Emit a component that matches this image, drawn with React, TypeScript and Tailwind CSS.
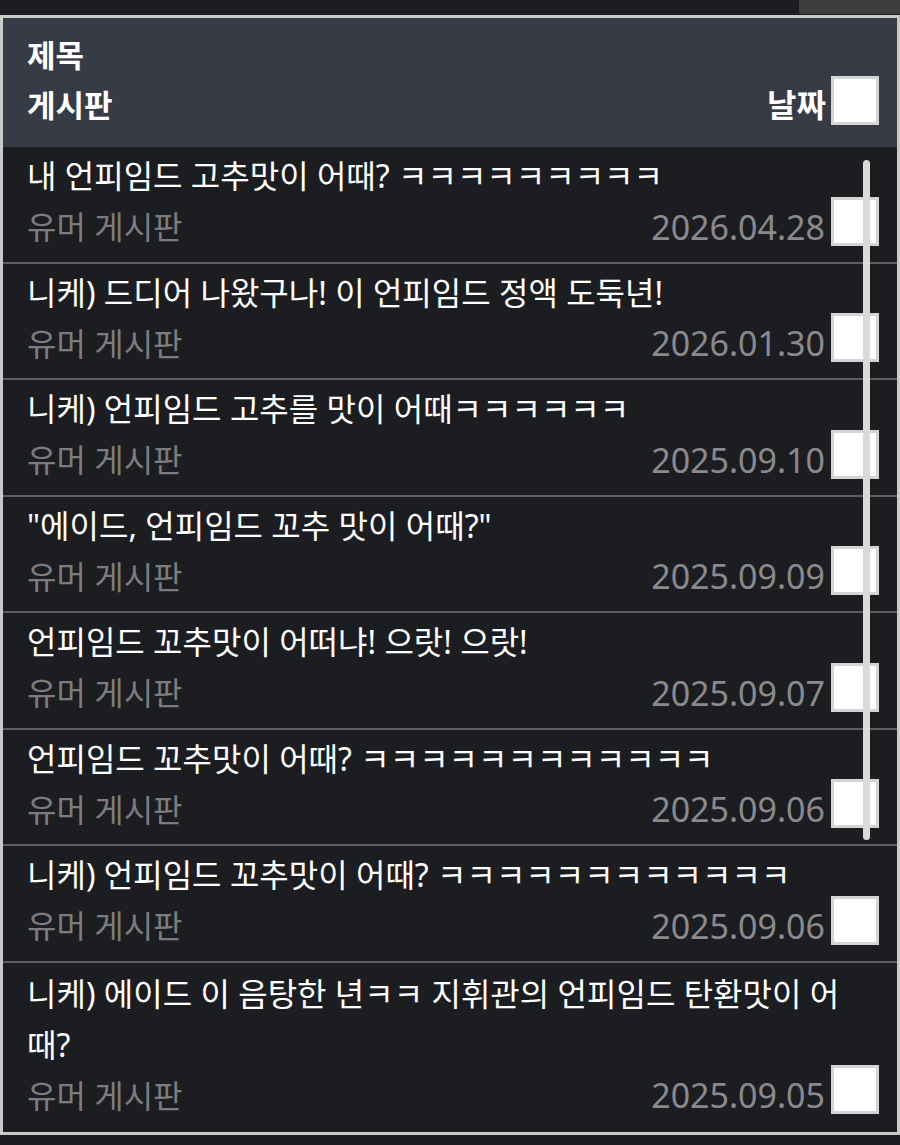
const posts = [
  { title: '내 언피임드 고추맛이 어때? ㅋㅋㅋㅋㅋㅋㅋㅋㅋ', date: '2026.04.28' },
  { title: '니케) 드디어 나왔구나! 이 언피임드 정액 도둑년!', date: '2026.01.30' },
  { title: '니케) 언피임드 고추를 맛이 어때ㅋㅋㅋㅋㅋㅋ', date: '2025.09.10' },
  { title: '"에이드, 언피임드 꼬추 맛이 어때?"', date: '2025.09.09' },
  { title: '언피임드 꼬추맛이 어떠냐! 으랏! 으랏!', date: '2025.09.07' },
  { title: '언피임드 꼬추맛이 어때? ㅋㅋㅋㅋㅋㅋㅋㅋㅋㅋㅋㅋ', date: '2025.09.06' },
  { title: '니케) 언피임드 꼬추맛이 어때? ㅋㅋㅋㅋㅋㅋㅋㅋㅋㅋㅋㅋ', date: '2025.09.06' },
  { title: '니케) 에이드 이 음탕한 년ㅋㅋ 지휘관의 언피임드 탄환맛이 어때?', date: '2025.09.05' },
];

const Box = () => <span className="block w-[48px] h-[49px] shrink-0 bg-white border-[3px] border-[#d4d4d4]" />;

export default function App() {
  return (
    <main
      className="w-[900px] h-[1145px] bg-[#1c1d21] text-white"
      style={{ fontFamily: '"Noto Sans", "Noto Sans CJK KR", sans-serif' }}
    >
      <div className="flex justify-end h-[15px]">
        <div className="w-[101px] h-[14px] bg-[#3d3d3f]" />
      </div>
      <section className="relative border-[3px] border-[#c9c9c9]">
        {/* 헤더 */}
        <header className="bg-[#363b45] pl-[24px] pr-[18px] pt-[12px] h-[129px] font-bold">
          <div className="leading-[50px] text-[31px]">제목</div>
          <div className="flex items-center justify-between leading-[50px]">
            <span className="text-[31px]">게시판</span>
            <span className="flex items-center gap-[5px] text-[32px]">
              날짜
              <span className="-translate-y-[5px]">
                <Box />
              </span>
            </span>
          </div>
        </header>

        {/* 목록 */}
        <ul>
          {posts.map((p, i) => {
            const last = i === posts.length - 1;
            return (
              <li
                key={i}
                className={`pl-[24px] pr-[18px] ${last ? 'pt-[5px] pb-[10px]' : 'pt-[4px] pb-[8.5px]'} ${i > 0 ? 'border-t-2 border-[#5d5d5f]' : ''}`}
              >
                <p className={`text-[32px] pr-[20px] ${last ? 'leading-[51px]' : 'leading-[50px]'}`}>{p.title}</p>
                <div className="flex items-center justify-between h-[52px]">
                  <span className="text-[32px] text-[#7c7c7e]">유머 게시판</span>
                  <span className="flex items-center gap-[6px]">
                    <span className="text-[34px] text-[#8a8a8c]">{p.date}</span>
                    <span className="-translate-y-[6px]">
                      <Box />
                    </span>
                  </span>
                </div>
              </li>
            );
          })}
        </ul>

        {/* 스크롤바 */}
        <div className="absolute left-[860px] top-[142px] w-[7px] h-[680px] rounded-full bg-[#dadada]" />
      </section>
    </main>
  );
}
